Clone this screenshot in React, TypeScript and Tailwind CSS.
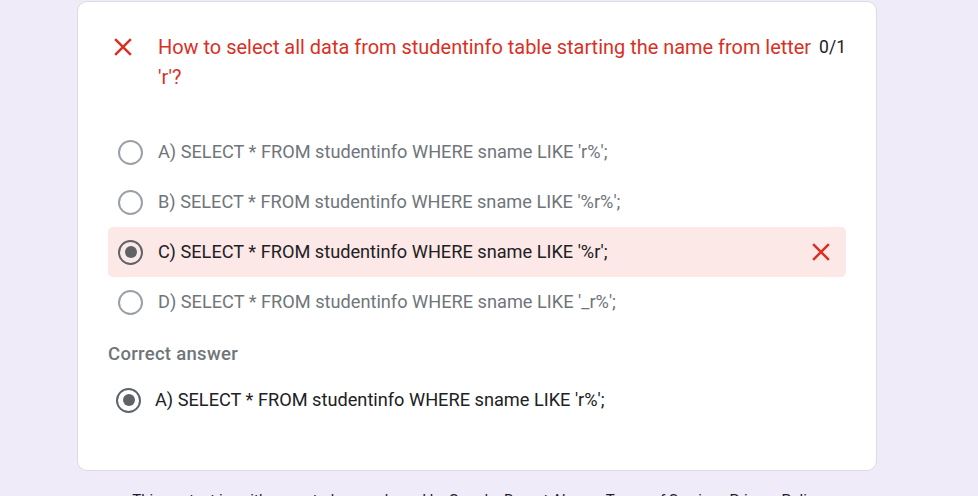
import React from "react";

const CloseIcon = ({ className }: { className?: string }) => (
  <svg viewBox="0 0 24 24" className={className} fill="currentColor">
    <path d="M19 6.41L17.59 5 12 10.59 6.41 5 5 6.41 10.59 12 5 17.59 6.41 19 12 13.41 17.59 19 19 17.59 13.41 12z" />
  </svg>
);

const Radio = ({ checked }: { checked?: boolean }) => (
  <span
    className={`flex h-[25px] w-[25px] shrink-0 items-center justify-center rounded-full border-[2.5px] ${
      checked ? "border-[#5f6368]" : "border-[#9aa0a6]"
    }`}
  >
    {checked && <span className="h-[12px] w-[12px] rounded-full bg-[#5f6368]" />}
  </span>
);

const options = [
  { label: "A) SELECT * FROM studentinfo WHERE sname LIKE 'r%';" },
  { label: "B) SELECT * FROM studentinfo WHERE sname LIKE '%r%';" },
  { label: "C) SELECT * FROM studentinfo WHERE sname LIKE '%r';", chosen: true },
  { label: "D) SELECT * FROM studentinfo WHERE sname LIKE '_r%';" },
];

export default function App() {
  return (
    <div className="min-h-[496px] bg-[#f0ebf8] pt-px font-['Roboto',sans-serif]">
      <div className="ml-[77px] w-[800px] rounded-[10px] border border-[#dadce0] bg-white px-[30px] pt-[30px] pb-[45px]">
        <div className="flex items-start">
          <CloseIcon className="h-[30px] w-[30px] shrink-0 text-[#d93025]" />
          <div className="ml-[20px] flex-1 text-[19.95px] leading-[30px] text-[#d93025]">
            How to select all data from studentinfo table starting the name from letter 'r'?
          </div>
          <div className="ml-[5px] shrink-0 text-[17.5px] leading-[30px] text-[#202124]">0/1</div>
        </div>

        <div className="mt-[35px] flex flex-col">
          {options.map((o) => (
            <div
              key={o.label}
              className={`flex h-[50px] items-center rounded-[5px] pl-[10px] pr-[10px] ${
                o.chosen ? "bg-[#fce8e6]" : ""
              }`}
            >
              <Radio checked={o.chosen} />
              <span
                className={`ml-[15px] flex-1 text-[18.2px] ${
                  o.chosen ? "text-[#202124]" : "text-[#70757a]"
                }`}
              >
                {o.label}
              </span>
              {o.chosen && <CloseIcon className="h-[30px] w-[30px] text-[#d93025]" />}
            </div>
          ))}
        </div>

        <div className="mt-[15px] text-[18.5px] font-medium leading-[25px] tracking-[0.3px] text-[#70757a]">
          Correct answer
        </div>
        <div className="mt-[8px] flex h-[50px] items-center pl-[8px]">
          <Radio checked />
          <span className="ml-[14px] text-[18.2px] text-[#202124]">
            A) SELECT * FROM studentinfo WHERE sname LIKE 'r%';
          </span>
        </div>
      </div>

      <div className="ml-[77px] mt-[19px] w-[800px] text-center text-[15px] leading-[20px] text-[#202124]">
        This content is neither created nor endorsed by Google.{" "}
        <a className="underline">Report Abuse</a> - <a className="underline">Terms of Service</a> -{" "}
        <a className="underline">Privacy Policy</a>
      </div>
    </div>
  );
}
